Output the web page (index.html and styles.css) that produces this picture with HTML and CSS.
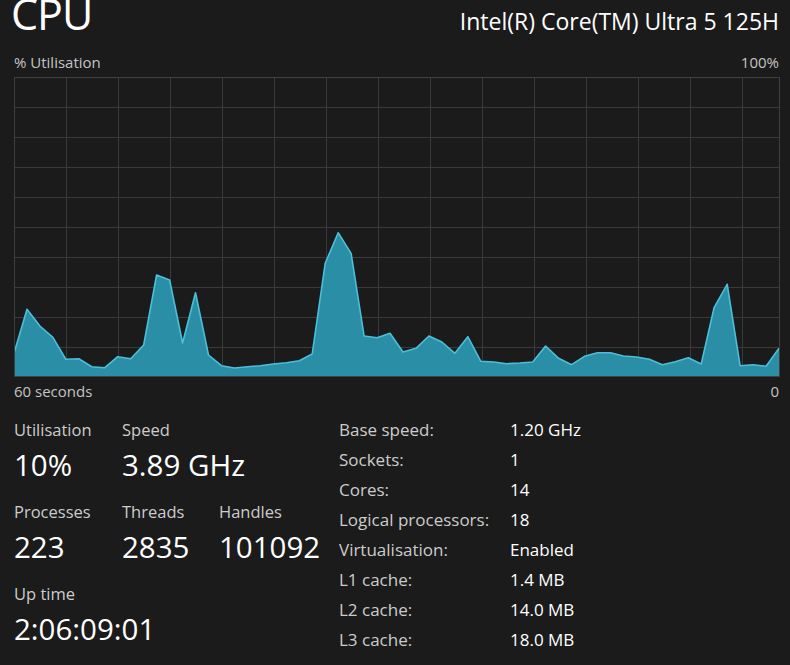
FILE: index.html
```html
<!DOCTYPE html>
<html lang="en">
<head>
<meta charset="utf-8">
<title>CPU</title>
<link rel="stylesheet" href="styles.css">
</head>
<body>
<div class="page">
  <header class="head">
    <h1 class="title">CPU</h1>
    <div class="model">Intel(R) Core(TM) Ultra 5 125H</div>
  </header>
  <div class="axis axis-top"><span>% Utilisation</span><span>100%</span></div>
  <svg class="chart" width="766" height="300" viewBox="0 0 766 300">
    <g class="grid">
      <line x1="52.5" y1="0" x2="52.5" y2="300"/><line x1="104.5" y1="0" x2="104.5" y2="300"/>
      <line x1="156.5" y1="0" x2="156.5" y2="300"/><line x1="208.5" y1="0" x2="208.5" y2="300"/>
      <line x1="260.5" y1="0" x2="260.5" y2="300"/><line x1="312.5" y1="0" x2="312.5" y2="300"/>
      <line x1="364.5" y1="0" x2="364.5" y2="300"/><line x1="416.5" y1="0" x2="416.5" y2="300"/>
      <line x1="468.5" y1="0" x2="468.5" y2="300"/><line x1="520.5" y1="0" x2="520.5" y2="300"/>
      <line x1="572.5" y1="0" x2="572.5" y2="300"/><line x1="624.5" y1="0" x2="624.5" y2="300"/>
      <line x1="676.5" y1="0" x2="676.5" y2="300"/><line x1="728.5" y1="0" x2="728.5" y2="300"/>
      <line x1="0" y1="30.5" x2="766" y2="30.5"/><line x1="0" y1="60.5" x2="766" y2="60.5"/>
      <line x1="0" y1="90.5" x2="766" y2="90.5"/><line x1="0" y1="120.5" x2="766" y2="120.5"/>
      <line x1="0" y1="150.5" x2="766" y2="150.5"/><line x1="0" y1="180.5" x2="766" y2="180.5"/>
      <line x1="0" y1="210.5" x2="766" y2="210.5"/><line x1="0" y1="240.5" x2="766" y2="240.5"/>
      <line x1="0" y1="270.5" x2="766" y2="270.5"/>
    </g>
    <polygon class="area" points="0.5,299 0.5,274.7 13,232.3 25.9,249 38.9,260.3 51.9,282.3 64.8,281.7 77.8,289.7 90.8,290.7 103.7,279.7 116.7,281.7 129.7,268 142.6,198 155.6,203 168.6,266 181.5,215.7 194.5,278 207.5,288.7 220.4,291 233.4,289.7 246.4,288.7 259.3,287 272.3,285.7 285.3,283.7 298.2,277 311.2,186.3 324.2,155.7 337.1,176.3 350.1,259 363.1,260.7 376,256.3 389,275 402,271.3 414.9,259 427.9,265 440.9,276.3 453.8,259.7 466.8,284.3 479.8,285 492.7,286.7 505.7,286 518.7,285 531.6,269 544.6,281.3 557.6,287.7 570.5,279.3 583.5,275.7 596.5,275.7 609.4,279 622.4,280 635.4,282.3 648.3,287.7 661.3,284.7 674.3,280.7 687.2,287 700.2,230.3 713.2,207.3 726.1,288.7 739.1,287.7 752.1,289.3 765,271.3 765,299"/>
    <polyline class="line" points="0.5,274.7 13,232.3 25.9,249 38.9,260.3 51.9,282.3 64.8,281.7 77.8,289.7 90.8,290.7 103.7,279.7 116.7,281.7 129.7,268 142.6,198 155.6,203 168.6,266 181.5,215.7 194.5,278 207.5,288.7 220.4,291 233.4,289.7 246.4,288.7 259.3,287 272.3,285.7 285.3,283.7 298.2,277 311.2,186.3 324.2,155.7 337.1,176.3 350.1,259 363.1,260.7 376,256.3 389,275 402,271.3 414.9,259 427.9,265 440.9,276.3 453.8,259.7 466.8,284.3 479.8,285 492.7,286.7 505.7,286 518.7,285 531.6,269 544.6,281.3 557.6,287.7 570.5,279.3 583.5,275.7 596.5,275.7 609.4,279 622.4,280 635.4,282.3 648.3,287.7 661.3,284.7 674.3,280.7 687.2,287 700.2,230.3 713.2,207.3 726.1,288.7 739.1,287.7 752.1,289.3 765,271.3"/>
    <rect class="frame" x="0.5" y="0.5" width="765" height="299"/>
  </svg>
  <div class="axis axis-bottom"><span>60 seconds</span><span>0</span></div>
  <section class="stats">
    <div class="live">
      <div class="stat"><div class="label">Utilisation</div><div class="value">10%</div></div>
      <div class="stat span2"><div class="label">Speed</div><div class="value">3.89 GHz</div></div>
      <div class="stat"><div class="label">Processes</div><div class="value">223</div></div>
      <div class="stat"><div class="label">Threads</div><div class="value">2835</div></div>
      <div class="stat"><div class="label">Handles</div><div class="value">101092</div></div>
      <div class="stat span3"><div class="label">Up time</div><div class="value">2:06:09:01</div></div>
    </div>
    <dl class="specs">
      <dt>Base speed:</dt><dd>1.20 GHz</dd>
      <dt>Sockets:</dt><dd>1</dd>
      <dt>Cores:</dt><dd>14</dd>
      <dt>Logical processors:</dt><dd>18</dd>
      <dt>Virtualisation:</dt><dd>Enabled</dd>
      <dt>L1 cache:</dt><dd>1.4 MB</dd>
      <dt>L2 cache:</dt><dd>14.0 MB</dd>
      <dt>L3 cache:</dt><dd>18.0 MB</dd>
    </dl>
  </section>
</div>
</body>
</html>
```
FILE: styles.css
```css
html, body {
  margin: 0;
  padding: 0;
  background: #1b1b1b;
  width: 790px;
  height: 665px;
  overflow: hidden;
}
body {
  font-family: "Open Sans", "Noto Sans", sans-serif;
  color: #ffffff;
}
.page {
  padding: 0 11px 0 14px;
}
.head {
  display: flex;
  justify-content: space-between;
  align-items: baseline;
  height: 64px;
  margin-top: -12px;
}
.title {
  margin: 0 0 0 -3px;
  font-size: 43px;
  font-weight: 400;
  line-height: 52px;
  letter-spacing: -1px;
  color: #ffffff;
}
.model {
  font-size: 23px;
  line-height: 30px;
  color: #ffffff;
}
.axis {
  display: flex;
  justify-content: space-between;
  font-size: 15px;
  line-height: 20px;
  color: #c4c4c4;
}
.axis-top {
  height: 20px;
}
.chart {
  display: block;
  margin-top: 5px;
}
.grid line {
  stroke: #3a3a3a;
  stroke-width: 1;
}
.frame {
  fill: none;
  stroke: #3f3f3f;
  stroke-width: 1;
}
.area {
  fill: #2a8ea6;
}
.line {
  fill: none;
  stroke: #4bbfd9;
  stroke-width: 1.6;
  stroke-linejoin: round;
}
.axis-bottom {
  margin-top: 4px;
}
.stats {
  display: flex;
  margin-top: 14px;
}
.live {
  display: grid;
  grid-template-columns: 108px 97px auto;
  row-gap: 12px;
  width: 325px;
  padding-top: 4px;
  align-content: start;
}
.span2 { grid-column: span 2; }
.span3 { grid-column: span 3; }
.label {
  font-size: 16.5px;
  line-height: 22px;
  color: #cccccc;
}
.value {
  font-size: 29.5px;
  line-height: 48px;
  color: #ffffff;
  white-space: nowrap;
}
.specs {
  display: grid;
  grid-template-columns: 171px auto;
  margin: 0;
  font-size: 17px;
  line-height: 30px;
}
.specs dt {
  color: #cccccc;
}
.specs dd {
  margin: 0;
  color: #ffffff;
}
```
